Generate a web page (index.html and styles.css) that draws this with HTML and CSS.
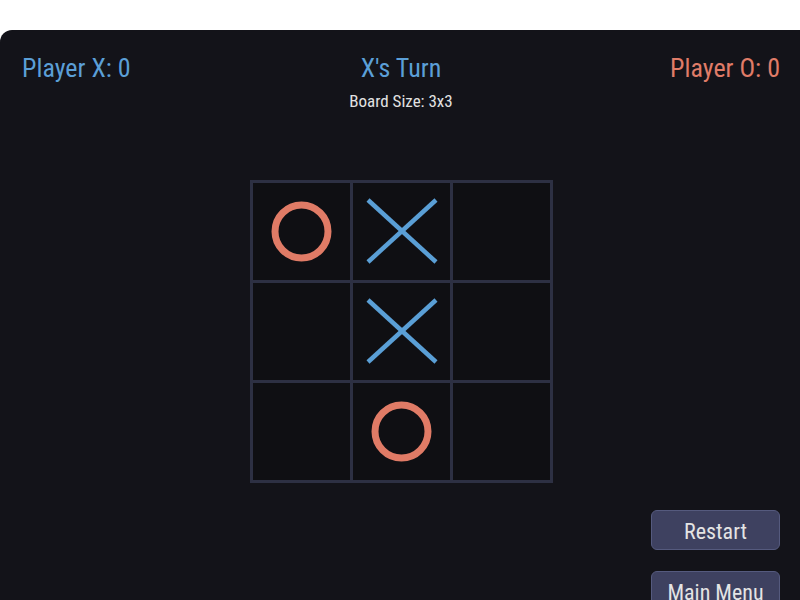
FILE: index.html
```html
<!DOCTYPE html>
<html>
<head>
<meta charset="utf-8">
<link rel="stylesheet" href="styles.css">
</head>
<body>
<div class="panel">
  <div class="header">
    <div class="score score-x">Player X: 0</div>
    <div class="center">
      <div class="turn">X's Turn</div>
      <div class="size">Board Size: 3x3</div>
    </div>
    <div class="score score-o">Player O: 0</div>
  </div>
  <div class="board-wrap">
    <div class="board">
      <div class="cell"><svg class="mark" viewBox="0 0 97 97"><circle class="o" cx="48.5" cy="48.5" r="26.5"/></svg></div>
      <div class="cell"><svg class="mark" viewBox="0 0 97 97"><line class="x" x1="15" y1="17" x2="83" y2="79"/><line class="x" x1="83" y1="17" x2="15" y2="79"/></svg></div>
      <div class="cell"></div>
      <div class="cell"></div>
      <div class="cell"><svg class="mark" viewBox="0 0 97 97"><line class="x" x1="15" y1="17" x2="83" y2="79"/><line class="x" x1="83" y1="17" x2="15" y2="79"/></svg></div>
      <div class="cell"></div>
      <div class="cell"></div>
      <div class="cell"><svg class="mark" viewBox="0 0 97 97"><circle class="o" cx="48.5" cy="48.5" r="26.5"/></svg></div>
      <div class="cell"></div>
    </div>
  </div>
  <div class="actions">
    <button class="btn">Restart</button>
    <button class="btn">Main Menu</button>
  </div>
</div>
</body>
</html>
```

FILE: styles.css
```css
html, body {
  margin: 0;
  padding: 0;
  background: #ffffff;
  overflow: hidden;
  width: 800px;
  height: 600px;
}
.panel {
  margin-top: 30px;
  width: 800px;
  height: 600px;
  background: #131319;
  border-radius: 12px 0 0 0;
  font-family: "Roboto", "Liberation Sans", Arial, sans-serif;
  font-stretch: 75%;
  padding-top: 23px;
  box-sizing: border-box;
}
.header {
  display: grid;
  grid-template-columns: 1fr auto 1fr;
  align-items: start;
  padding: 0 20px 0 22px;
}
.score {
  font-size: 26px;
  line-height: 31px;
}
.score-x { color: #5b9fd7; }
.score-o { color: #e07c68; text-align: right; }
.center {
  display: flex;
  flex-direction: column;
  align-items: center;
}
.turn {
  font-size: 26px;
  line-height: 31px;
  color: #5b9fd7;
}
.size {
  margin-top: 7px;
  font-size: 17px;
  line-height: 20px;
  color: #e2e2e2;
}
.board-wrap {
  display: flex;
  justify-content: center;
  padding-left: 3px;
  margin-top: 69px;
}
.board {
  display: grid;
  grid-template-columns: repeat(3, 97px);
  grid-template-rows: repeat(3, 97px);
  gap: 3px;
  padding: 3px;
  background: #2d3043;
}
.cell {
  background: #0f0f13;
}
.mark {
  display: block;
  width: 97px;
  height: 97px;
}
.x {
  stroke: #5a9fd6;
  stroke-width: 4.5;
}
.o {
  fill: none;
  stroke: #e07b66;
  stroke-width: 7;
}
.actions {
  display: flex;
  flex-direction: column;
  align-items: flex-end;
  gap: 21px;
  padding-right: 20px;
  margin-top: 27px;
}
.btn {
  width: 129px;
  height: 40px;
  box-sizing: border-box;
  background: #3e4160;
  border: 1px solid #555a7e;
  border-radius: 6px;
  color: #e4e4e4;
  font-family: "Roboto", "Liberation Sans", Arial, sans-serif;
  font-stretch: 75%;
  font-size: 22px;
  line-height: 26px;
  padding: 3px 0 0 0;
}
```
